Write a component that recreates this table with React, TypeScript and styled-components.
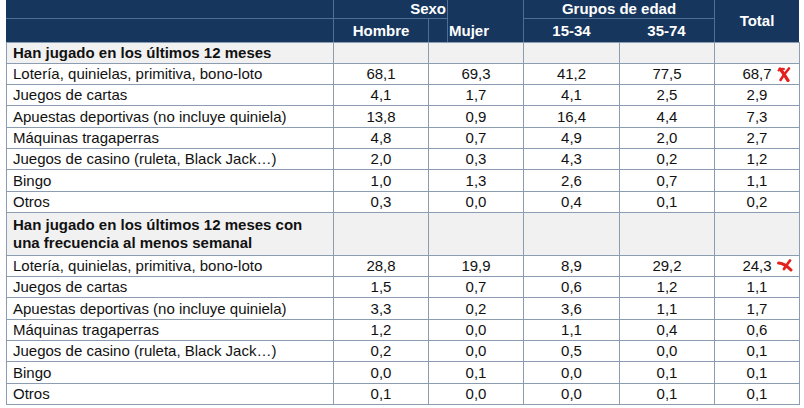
import React from "react";
import styled, { createGlobalStyle } from "styled-components";

const Global = createGlobalStyle`
  html, body { margin: 0; padding: 0; background: #ffffff; }
  body { font-family: "Liberation Sans", Arial, sans-serif; color: #111; }
`;

const Page = styled.div`
  padding: 0 5px 0 6px;
  width: 793px;
`;

const COLS = "327px 95px 19px 76px 96px 95px 85px";

const Head = styled.div`
  display: grid;
  grid-template-columns: ${COLS};
  grid-template-rows: 19px 23px;
  background: #17365d;
  color: #ffffff;
  font-weight: bold;
  font-size: 15px;
`;

const HeadCell = styled.div<{
  $col: string;
  $row: string;
  $align?: "left" | "center" | "right";
  $bottom?: boolean;
  $left?: boolean;
}>`
  grid-column: ${(p) => p.$col};
  grid-row: ${(p) => p.$row};
  display: flex;
  align-items: center;
  justify-content: ${(p) =>
    p.$align === "left" ? "flex-start" : p.$align === "right" ? "flex-end" : "center"};
  padding: 0 1px;
  border-bottom: ${(p) => (p.$bottom ? "1px solid #4f6d95" : "none")};
  border-left: ${(p) => (p.$left ? "1px solid #4f6d95" : "none")};
  line-height: 16px;
  box-sizing: border-box;
`;

const Table = styled.table`
  border-collapse: collapse;
  table-layout: fixed;
  width: 793px;
  font-size: 15px;
`;

const Col = styled.col<{ $w: number }>`
  width: ${(p) => p.$w}px;
`;

const Row = styled.tr<{ $h: number }>`
  height: ${(p) => p.$h}px;
`;

const Cell = styled.td<{ $section?: boolean; $num?: boolean }>`
  border: 1px solid #8d9db1;
  padding: 0 ${(p) => (p.$num ? "0" : "6px")};
  text-align: ${(p) => (p.$num ? "center" : "left")};
  background: ${(p) => (p.$section ? "#f1f1f1" : "#ffffff")};
  font-weight: ${(p) => (p.$section ? "bold" : "normal")};
  line-height: 18px;
  white-space: nowrap;
  vertical-align: middle;
  position: relative;
`;

const SectionText = styled.span`
  display: block;
  white-space: normal;
  width: 306px;
`;

const Mark = styled.svg`
  position: absolute;
  right: 8px;
  top: 50%;
  transform: translateY(-50%);
`;

type R = [string, string, string, string, string, string];

const block1: R[] = [
  ["Lotería, quinielas, primitiva, bono-loto", "68,1", "69,3", "41,2", "77,5", "68,7"],
  ["Juegos de cartas", "4,1", "1,7", "4,1", "2,5", "2,9"],
  ["Apuestas deportivas (no incluye quiniela)", "13,8", "0,9", "16,4", "4,4", "7,3"],
  ["Máquinas tragaperras", "4,8", "0,7", "4,9", "2,0", "2,7"],
  ["Juegos de casino (ruleta, Black Jack…)", "2,0", "0,3", "4,3", "0,2", "1,2"],
  ["Bingo", "1,0", "1,3", "2,6", "0,7", "1,1"],
  ["Otros", "0,3", "0,0", "0,4", "0,1", "0,2"],
];

const block2: R[] = [
  ["Lotería, quinielas, primitiva, bono-loto", "28,8", "19,9", "8,9", "29,2", "24,3"],
  ["Juegos de cartas", "1,5", "0,7", "0,6", "1,2", "1,1"],
  ["Apuestas deportivas (no incluye quiniela)", "3,3", "0,2", "3,6", "1,1", "1,7"],
  ["Máquinas tragaperras", "1,2", "0,0", "1,1", "0,4", "0,6"],
  ["Juegos de casino (ruleta, Black Jack…)", "0,2", "0,0", "0,5", "0,0", "0,1"],
  ["Bingo", "0,0", "0,1", "0,0", "0,1", "0,1"],
  ["Otros", "0,1", "0,0", "0,0", "0,1", "0,1"],
];

const MarkX = () => (
  <Mark width="14" height="16" viewBox="0 0 14 16">
    <path d="M3 3 C6 6 8 10 11 14.5" stroke="#e3211d" strokeWidth="3.2" fill="none" strokeLinecap="round" />
    <path d="M12 2.5 C9 6 6 10 3.5 14" stroke="#e3211d" strokeWidth="2.6" fill="none" strokeLinecap="round" />
    <path d="M1.5 4.5 C3 3 5 2.5 7 3" stroke="#e3211d" strokeWidth="2" fill="none" strokeLinecap="round" />
  </Mark>
);

const MarkFlat = () => (
  <Mark width="16" height="14" viewBox="0 0 16 14" style={{ top: "3px", transform: "none", right: "6px" }}>
    <path d="M1.5 4 C5 4 9 6 14 11" stroke="#e3211d" strokeWidth="3" fill="none" strokeLinecap="round" />
    <path d="M13 1.5 C11 4 9 7 7 10" stroke="#e3211d" strokeWidth="2.8" fill="none" strokeLinecap="round" />
  </Mark>
);

const heights1 = [21, 21, 22, 21, 21, 22, 21];
const heights2 = [21, 21, 22, 21, 21, 22, 21];

const DataRows = ({ rows, heights, mark }: { rows: R[]; heights: number[]; mark: React.ReactNode }) => (
  <>
    {rows.map((r, i) => (
      <Row key={r[0] + i} $h={heights[i]}>
        <Cell>{r[0]}</Cell>
        <Cell $num>{r[1]}</Cell>
        <Cell $num>{r[2]}</Cell>
        <Cell $num>{r[3]}</Cell>
        <Cell $num>{r[4]}</Cell>
        <Cell $num>
          {r[5]}
          {i === 0 ? mark : null}
        </Cell>
      </Row>
    ))}
  </>
);

export default function App() {
  return (
    <>
      <Global />
      <Page>
        <Head>
          <HeadCell $col="1" $row="1" $bottom />
          <HeadCell $col="2 / 4" $row="1" $align="right" $bottom $left>
            Sexo
          </HeadCell>
          <HeadCell $col="4" $row="1" $left />
          <HeadCell $col="5 / 7" $row="1" $bottom $left>
            Grupos de edad
          </HeadCell>
          <HeadCell $col="7" $row="1 / 3" $left>
            Total
          </HeadCell>
          <HeadCell $col="1" $row="2" />
          <HeadCell $col="2" $row="2" $left>
            Hombre
          </HeadCell>
          <HeadCell $col="3" $row="2" $left />
          <HeadCell $col="4" $row="2" $align="left" $left>
            Mujer
          </HeadCell>
          <HeadCell $col="5" $row="2" $left>
            15-34
          </HeadCell>
          <HeadCell $col="6" $row="2">
            35-74
          </HeadCell>
        </Head>
        <Table>
          <colgroup>
            <Col $w={327} />
            <Col $w={95} />
            <Col $w={95} />
            <Col $w={96} />
            <Col $w={95} />
            <Col $w={85} />
          </colgroup>
          <tbody>
            <Row $h={21}>
              <Cell $section>Han jugado en los últimos 12 meses</Cell>
              <Cell $section />
              <Cell $section />
              <Cell $section />
              <Cell $section />
              <Cell $section />
            </Row>
            <DataRows rows={block1} heights={heights1} mark={<MarkX />} />
            <Row $h={43}>
              <Cell $section>
                <SectionText>
                  Han jugado en los últimos 12 meses con una frecuencia al menos semanal
                </SectionText>
              </Cell>
              <Cell $section />
              <Cell $section />
              <Cell $section />
              <Cell $section />
              <Cell $section />
            </Row>
            <DataRows rows={block2} heights={heights2} mark={<MarkFlat />} />
          </tbody>
        </Table>
      </Page>
    </>
  );
}
